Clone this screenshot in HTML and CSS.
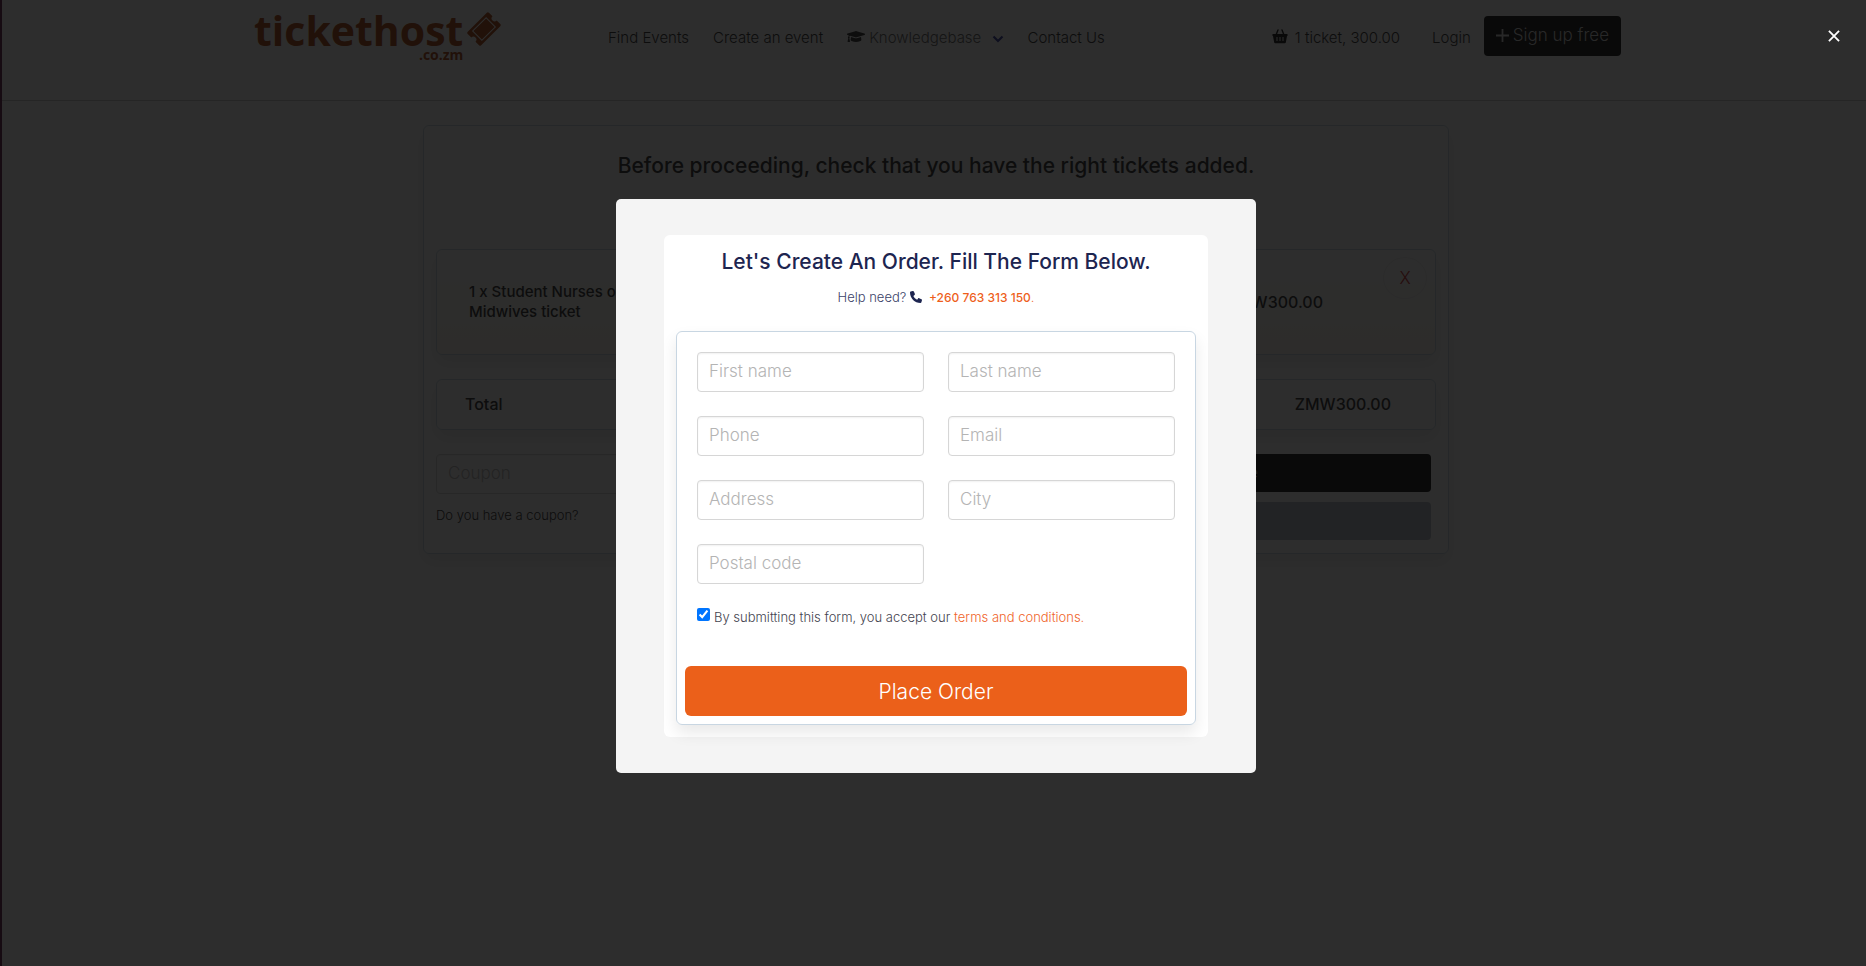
FILE: index.html
```html
<!DOCTYPE html>
<html lang="en">
<head>
<meta charset="utf-8">
<meta name="viewport" content="width=device-width, initial-scale=1">
<title>tickethost.co.zm – Checkout</title>
<link rel="stylesheet" href="styles.css">
</head>
<body>
<header class="site-header">
  <div class="header-row">
    <a class="logo" href="#">
      <span class="logo-words"><span class="logo-name">tickethost</span><span class="logo-domain">.co.zm</span></span>
      <svg class="logo-ticket" viewBox="0 0 34 34" aria-hidden="true"><g transform="rotate(-45 17 17)"><path fill="currentColor" d="M3.500 7.500H30.500A1.500 1.500 0 0 1 32 9V14a3 3 0 0 0 0 6V25a1.500 1.500 0 0 1-1.500 1.500H3.500A1.500 1.500 0 0 1 2 25V20a3 3 0 0 0 0-6V9A1.500 1.500 0 0 1 3.500 7.500z"/><rect x="7.500" y="10.500" width="19" height="13" fill="none" stroke="#fff" stroke-width="1"/></g></svg>
    </a>
    <nav class="main-nav" aria-label="Main">
      <a href="#">Find Events</a>
      <a href="#">Create an event</a>
      <a href="#" class="muted"><svg class="cap" viewBox="0 0 640 512" aria-hidden="true"><path fill="currentColor" d="M622 153 343 67c-15-4-31-4-46 0L18 153c-24 7-24 39 0 46l49 15c-11 13-17 30-18 47-10 6-17 16-17 27 0 11 6 20 14 26L20 428c-2 10 5 20 16 20h56c11 0 18-10 16-20L82 314c8-6 14-15 14-26 0-11-6-20-14-26 1-15 9-29 21-37l194 60c9 3 27 6 46 0l279-86c24-7 24-39 0-46zM352 315c-31 10-56 4-65 0l-145-44-14 113c0 35 86 64 192 64s192-29 192-64l-14-113z"/></svg>Knowledgebase <svg class="chevron" viewBox="0 0 12 8" aria-hidden="true"><path d="M1.500 1.500 6 6l4.500-4.500" fill="none" stroke="currentColor" stroke-width="2.200"/></svg></a>
      <a href="#">Contact Us</a>
    </nav>
    <div class="account">
      <a href="#" class="cart"><svg class="basket" viewBox="0 0 16 15" aria-hidden="true"><path d="M4 6 6 1M12 6 10 1" stroke="currentColor" stroke-width="1.400" stroke-linecap="round"/><path fill="currentColor" fill-rule="evenodd" d="M.5 5h15v2H15l-1.200 6.500a1 1 0 0 1-1 .8H3.200a1 1 0 0 1-1-.8L1 7H.5zM4.500 8v4h1V8zm3 0v4h1V8zm3 0v4h1V8z"/></svg>1 ticket, 300.00</a>
      <a href="#">Login</a>
      <button type="button" class="signup"><svg class="plus" viewBox="0 0 13 13" aria-hidden="true"><path d="M6.500 0v13M0 6.500h13" stroke="currentColor" stroke-width="1.800"/></svg>Sign up free</button>
    </div>
  </div>
</header>

<main class="card checkout">
  <h1 class="checkout-title">Before proceeding, check that you have the right tickets added.</h1>
  <section class="card item">
    <p class="item-name">1 x Student Nurses or Midwives ticket</p>
    <p class="item-price">ZMW300.00</p>
    <button type="button" class="remove" aria-label="Remove ticket">X</button>
  </section>
  <section class="card total">
    <span>Total</span><span>ZMW300.00</span>
  </section>
  <div class="bottom-row">
    <div class="coupon">
      <input class="field" id="coupon" type="text" placeholder="Coupon">
      <label for="coupon">Do you have a coupon?</label>
    </div>
    <div class="actions">
      <button type="button" class="action dark">Proceed to purchase</button>
      <button type="button" class="action gray">Back</button>
    </div>
  </div>
</main>

<div class="overlay">
  <button type="button" class="close" aria-label="Close"><svg viewBox="0 0 13 13" aria-hidden="true"><path d="M1 1l11 11M12 1 1 12" stroke="currentColor" stroke-width="2"/></svg></button>
  <div class="modal" role="dialog" aria-modal="true" aria-labelledby="order-title">
    <div class="panel">
      <h2 class="panel-title" id="order-title">Let's Create An Order. Fill The Form Below.</h2>
      <p class="help">Help need? <svg class="phone" viewBox="0 0 512 512" aria-hidden="true"><path fill="currentColor" d="M165 25c-8-19-29-29-48-23L29 26C12 31 0 46 0 64c0 247 201 448 448 448 18 0 33-12 38-29l24-88c6-19-4-40-23-48l-96-40c-16-7-35-2-46 12l-41 49c-70-33-127-90-160-160l49-41c14-11 19-30 12-46z"/></svg><a href="tel:+260763313150">+260 763 313 150</a><span class="dot">.</span></p>
      <form class="card order-form">
        <div class="fields">
          <input class="field" type="text" aria-label="First name" placeholder="First name">
          <input class="field" type="text" aria-label="Last name" placeholder="Last name">
          <input class="field" type="tel" aria-label="Phone" placeholder="Phone">
          <input class="field" type="email" aria-label="Email" placeholder="Email">
          <input class="field" type="text" aria-label="Address" placeholder="Address">
          <input class="field" type="text" aria-label="City" placeholder="City">
          <input class="field" type="text" aria-label="Postal code" placeholder="Postal code">
        </div>
        <div class="terms">
          <input type="checkbox" id="accept" checked>
          <label for="accept">By submitting this form, you accept our <a href="#">terms and conditions.</a></label>
        </div>
        <button type="submit" class="place-order">Place Order</button>
      </form>
    </div>
  </div>
</div>
</body>
</html>
```
FILE: styles.css
```css
* { box-sizing: border-box; }

body {
  margin: 0;
  min-height: 100vh;
  border-left: 2px solid #60143f;
  background: #fff;
  color: #222;
  font: 300 15px/20px Inter, "Open Sans", sans-serif;
}

h1, h2, p { margin: 0; }
a { color: inherit; text-decoration: none; }
button, input { font: inherit; }
button { border: 0; cursor: pointer; }

/* Header */
.site-header { height: 101px; border-bottom: 1px solid #c8c8c8; }
.header-row {
  display: flex;
  max-width: 1374px;
  margin: 0 auto;
  padding-left: 7px;
}
.logo { display: flex; gap: 4px; width: 354px; padding-top: 8px; color: #a83a00; }
.logo-words { display: flex; flex-direction: column; align-items: flex-end; }
.logo-name { font: 700 41px/44px "Open Sans", sans-serif; }
.logo-domain { font: 700 14px/14px "Open Sans", sans-serif; margin-top: -4px; }
.logo-ticket { width: 34px; height: 34px; margin-top: 4px; }
.main-nav { display: flex; gap: 24px; padding-top: 28px; white-space: nowrap; }
.muted { color: #555; }
.cap { width: 18px; height: 15px; margin-right: 4px; vertical-align: -1px; color: #222; }
.chevron { width: 12px; height: 8px; margin-left: 6px; color: #262c98; }
.account { display: flex; margin-left: auto; padding-top: 28px; white-space: nowrap; }
.cart { margin-right: 32px; }
.basket { width: 16px; height: 15px; margin-right: 7px; vertical-align: -1px; color: #000; }
.signup {
  height: 40px;
  margin: -12px 0 0 13px;
  padding: 0 12px 2px;
  border-radius: 4px;
  background: #000;
  color: #ddd;
  font-size: 17px;
}
.plus { width: 13px; height: 13px; margin-right: 4px; vertical-align: -1px; }

/* Cart */
.card { border: 1px solid #c8d6e2; border-radius: 6px; box-shadow: 0 8px 16px rgba(0, 0, 0, .09); }
.checkout {
  width: calc(100% - 32px);
  max-width: 1026px;
  margin: 24px auto 0;
  padding: 28px 12px 13px;
  position: relative;
  left: 2px;
}
.checkout-title { font-size: 21px; line-height: 24px; font-weight: 500; text-align: center; }
.item {
  display: flex;
  position: relative;
  height: 106px;
  margin-top: 71px;
  padding: 32px;
  background: linear-gradient(#fff, #fff8ee);
  font-weight: 500;
}
.item-name { width: 170px; }
.item-price { margin: 10px 80px 0 auto; font-size: 16px; }
.remove {
  position: absolute;
  top: 7px;
  right: 8px;
  width: 44px;
  height: 42px;
  border: 1px solid #eee;
  border-radius: 50%;
  background: transparent;
  color: #c22;
  font-size: 17px;
  font-weight: 300;
}
.total {
  display: flex;
  justify-content: space-between;
  margin-top: 24px;
  padding: 14px 44px 15px 28px;
  font-size: 16px;
  font-weight: 500;
}
.bottom-row { display: grid; grid-template-columns: 1fr 1fr; gap: 8px; margin-top: 24px; }
.coupon { font-size: 13px; }
.coupon label { display: block; margin-top: 11px; }
.actions { display: grid; gap: 10px; padding: 0 5px 0 0; align-content: start; }
.action { height: 38px; border-radius: 4px; color: #ddd; }
.dark { background: #000; }
.gray { background: #b2bac2; color: #b2bac2; }

.field {
  width: 100%;
  height: 40px;
  min-width: 0;
  padding: 0 11px 2px;
  border: 1px solid #d6d6d6;
  border-radius: 4px;
  background: #fff;
  box-shadow: inset 0 1px 2px rgba(0, 0, 0, .06);
  font-size: 17px;
}
.field::placeholder { color: #b4b4b4; opacity: 1; }

/* Order dialog */
.overlay {
  position: fixed;
  inset: 0;
  display: flex;
  align-items: center;
  justify-content: center;
  padding: 6px 0 0 6px;
  background: rgba(11, 11, 11, .86);
}
.close {
  position: absolute;
  top: 22px;
  right: 18px;
  width: 28px;
  height: 28px;
  padding: 8px;
  background: transparent;
  color: #fff;
}
.close svg { display: block; width: 12px; height: 12px; }
.modal { width: 640px; padding: 36px 48px; border-radius: 5px; background: #f4f4f4; }
.panel { padding: 13px 12px 12px; border-radius: 6px; background: #fff; }
.panel-title {
  color: #1d2550;
  font-size: 21px;
  line-height: 28px;
  font-weight: 500;
  text-align: center;
}
.help { margin: 12px 0 24px; font-size: 13px; line-height: 19px; text-align: center; color: #3b4268; }
.help a { color: #ee5f1c; font-size: 12px; font-weight: 500; }
.dot { color: #ee5f1c; }
.phone { width: 12px; height: 12px; margin-right: 7px; vertical-align: -1px; color: #1d2550; }
.order-form { padding: 20px 8px 8px; }
.fields { display: grid; grid-template-columns: 1fr 1fr; gap: 24px; padding: 0 12px; }
.terms { display: flex; gap: 4px; padding: 24px 12px 0; font-size: 13px; line-height: 18px; color: #444450; }
.terms input { width: 13px; height: 13px; margin: 0; accent-color: #0075ff; }
.terms a { color: #f0642a; }
.place-order {
  display: block;
  width: 100%;
  height: 50px;
  margin-top: 40px;
  padding: 2px 0 0;
  border-radius: 6px;
  background: #eb601a;
  color: #fff;
  font-size: 21px;
}
```
